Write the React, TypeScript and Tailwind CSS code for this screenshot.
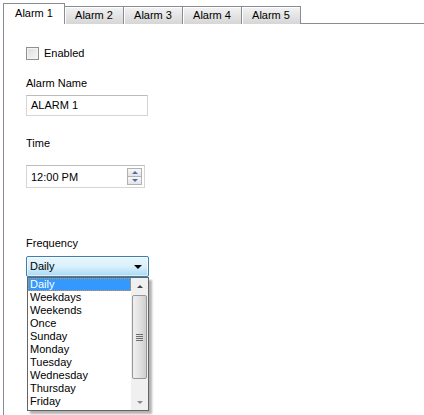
const tabs = ['Alarm 1', 'Alarm 2', 'Alarm 3', 'Alarm 4', 'Alarm 5'];

const options = [
  'Daily',
  'Weekdays',
  'Weekends',
  'Once',
  'Sunday',
  'Monday',
  'Tuesday',
  'Wednesday',
  'Thursday',
  'Friday',
];

const App = () => {
  return (
    <div
      className="w-[424px] h-[415px] bg-white overflow-hidden flex flex-col pt-[3px] pl-[3px] text-[11px] leading-[13px] text-black"
      style={{ fontFamily: '"Liberation Sans", Arial, sans-serif' }}
    >
      {/* tab strip */}
      <div className="flex items-end h-[21px] relative z-10">
        {tabs.map((t, i) =>
          i === 0 ? (
            <div
              key={t}
              className="w-[62px] h-[21px] border border-b-0 border-[#898c95] bg-white flex items-center justify-center pb-px"
            >
              {t}
            </div>
          ) : (
            <div
              key={t}
              className="w-[60px] h-[18px] -ml-px border border-b-0 border-[#898c95] bg-gradient-to-b from-[#f3f3f3] to-[#d6d6d6] flex items-center justify-center shadow-[inset_1px_1px_0_#fff]"
            >
              {t}
            </div>
          )
        )}
      </div>

      {/* panel */}
      <div className="flex-1 -mt-px border-l border-t border-[#898c95] pl-[22px] flex flex-col">
        <label className="mt-[23px] h-[13px] flex items-center gap-[5px]">
          <span className="w-[13px] h-[13px] border border-[#8f8f8f] bg-gradient-to-br from-[#dcdcdc] to-[#f8f8f8] shadow-[inset_0_0_0_1px_#f4f4f4]" />
          <span>Enabled</span>
        </label>

        <div className="mt-[17px] h-[13px]">Alarm Name</div>
        <div className="mt-[5px] w-[122px] h-[21px] border border-[#d5d5d5] border-t-[#bcbcbc] flex items-center pl-[4px]">
          ALARM 1
        </div>

        <div className="mt-[21px] h-[13px]">Time</div>
        <div className="mt-[15px] w-[119px] h-[23px] border border-[#d5d5d5] border-t-[#bcbcbc] flex items-center pl-[4px] pr-[2px]">
          <span className="flex-1 pt-px">12:00 PM</span>
          <div className="flex flex-col gap-0 w-[15px]">
            <div className="h-[9px] border border-[#b2b2b2] bg-gradient-to-b from-[#f8f8f8] to-[#e4e4e4] flex items-center justify-center">
              <span className="w-0 h-0 border-l-[3px] border-r-[3px] border-b-[3px] border-l-transparent border-r-transparent border-b-[#4a6fae]" />
            </div>
            <div className="h-[9px] -mt-px border border-[#b2b2b2] bg-gradient-to-b from-[#f8f8f8] to-[#e4e4e4] flex items-center justify-center">
              <span className="w-0 h-0 border-l-[3px] border-r-[3px] border-t-[3px] border-l-transparent border-r-transparent border-t-[#4a6fae]" />
            </div>
          </div>
        </div>

        <div className="mt-[49px] h-[13px]">Frequency</div>
        <div className="relative mt-[6px] w-[123px]">
          <div className="h-[21px] border border-[#3c7fb1] rounded-[2px] bg-gradient-to-b from-[#eaf6fd] via-[#d9f0fc] to-[#a7d9f5] flex items-center pl-[3px] pr-[6px] shadow-[inset_0_0_0_1px_rgba(255,255,255,0.6)]">
            <span className="flex-1">Daily</span>
            <span className="w-0 h-0 border-l-[4px] border-r-[4px] border-t-[4px] border-l-transparent border-r-transparent border-t-black" />
          </div>

          {/* open list */}
          <div className="absolute left-[1px] top-full w-[122px] h-[134px] border border-[#646464] bg-white flex shadow-[3px_3px_2px_rgba(0,0,0,0.3)]">
            <div className="flex-1 flex flex-col">
              {options.map((o, i) => (
                <div
                  key={o}
                  className={
                    i === 0
                      ? 'h-[13px] pl-[2px] bg-[#3399ff] text-white outline-1 outline-dotted outline-[#e0903a] -outline-offset-1 leading-[13px]'
                      : 'h-[13px] pl-[2px] leading-[13px]'
                  }
                >
                  {o}
                </div>
              ))}
            </div>
            {/* scrollbar */}
            <div className="w-[17px] bg-[#f0f0f0] flex flex-col items-center">
              <div className="h-[17px] w-full flex items-center justify-center">
                <span className="w-0 h-0 border-l-[3px] border-r-[3px] border-b-[3px] border-l-transparent border-r-transparent border-b-[#444]" />
              </div>
              <div className="h-[84px] w-[15px] border border-[#979797] rounded-[2px] bg-gradient-to-r from-[#f0f0f0] via-[#e2e2e2] to-[#cfcfcf] flex flex-col items-center justify-center gap-[1px]">
                <span className="w-[7px] h-px bg-[#6d6d6d]" />
                <span className="w-[7px] h-px bg-[#6d6d6d]" />
                <span className="w-[7px] h-px bg-[#6d6d6d]" />
                <span className="w-[7px] h-px bg-[#6d6d6d]" />
              </div>
              <div className="flex-1 w-full flex items-end justify-center pb-[6px]">
                <span className="w-0 h-0 border-l-[3px] border-r-[3px] border-t-[3px] border-l-transparent border-r-transparent border-t-[#888]" />
              </div>
            </div>
          </div>
        </div>
      </div>
    </div>
  );
};

export default App;
